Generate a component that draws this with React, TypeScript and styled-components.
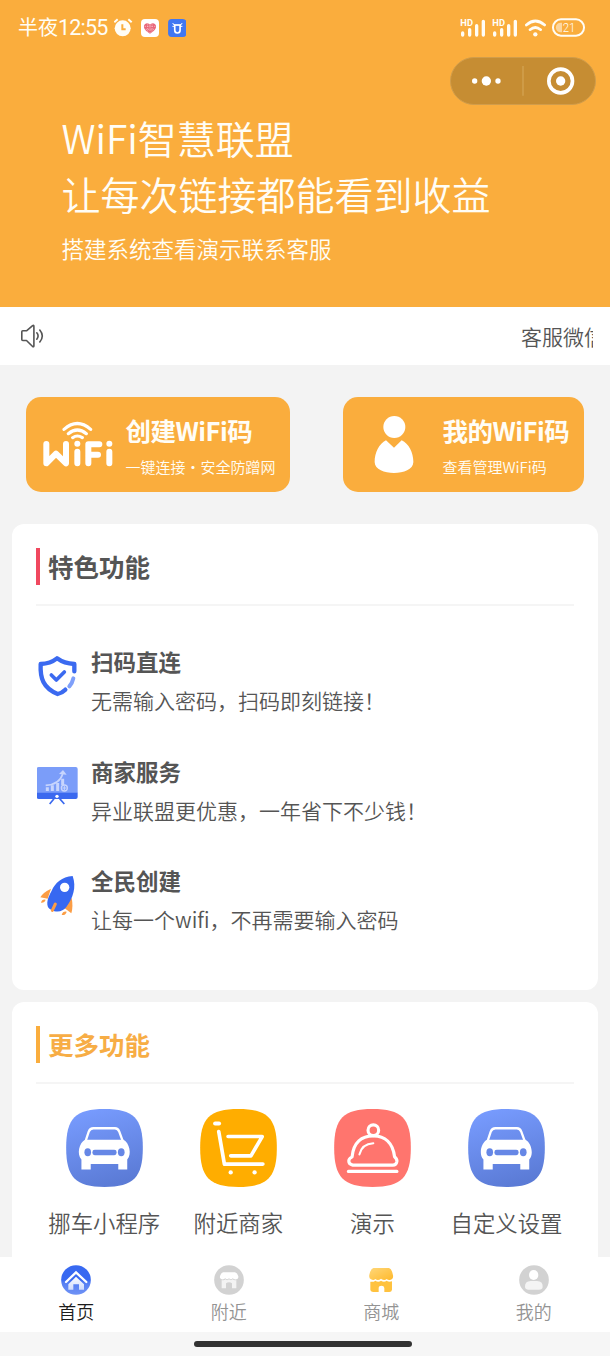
import React from "react";
import styled, { createGlobalStyle } from "styled-components";

const BRAND = "#faad3d";

const GlobalStyle = createGlobalStyle`
  * { box-sizing: border-box; }
  body {
    margin: 0;
    background: #f3f3f3;
    font-family: "Noto Sans CJK SC", "Noto Sans", sans-serif;
    font-weight: 350;
    color: #555;
  }
  svg { display: block; flex: none; }
`;

const Screen = styled.div`
  width: 610px;
  height: 1356px;
  display: flex;
  flex-direction: column;
  overflow: hidden;
`;

const Content = styled.main`
  flex: 1;
  min-height: 0;
  overflow: hidden;
`;

const Hero = styled.header`
  height: 307px;
  background: ${BRAND};
  color: #fffdf6;
`;

const StatusBar = styled.div`
  height: 55px;
  padding: 0 25px 0 18px;
  display: flex;
  align-items: center;
  justify-content: space-between;
`;

const StatusGroup = styled.div<{ $gap: number }>`
  display: flex;
  align-items: center;
  gap: ${(p) => p.$gap}px;
`;

const Clock = styled.span`
  width: 87px;
  font-size: 20px;
  line-height: 28px;
  font-weight: 400;
  white-space: nowrap;
`;

const ClockDigits = styled.span`
  font-family: Roboto, sans-serif;
  font-size: 21.5px;
  letter-spacing: -0.8px;
`;

const Capsule = styled.div`
  width: 146px;
  height: 48px;
  margin: 2px 14px 0 auto;
  border-radius: 24px;
  background: #c68d33;
  border: 1px solid #d19d4b;
`;

const HeroText = styled.div`
  padding: 4px 61px 0 61.5px;
`;

const HeroTitle = styled.h1`
  margin: 0;
  font-size: 39px;
  line-height: 56px;
  font-weight: 350;
  white-space: nowrap;
`;

const HeroSubtitle = styled.p`
  margin: 10px 0 0;
  font-size: 22.5px;
  line-height: 34px;
`;

const Notice = styled.div`
  height: 58px;
  padding: 0 17px 0 20px;
  display: flex;
  align-items: center;
  justify-content: space-between;
  background: #fff;
`;

const NoticeText = styled.div`
  width: 72px;
  overflow: hidden;
  white-space: nowrap;
  font-size: 21px;
  line-height: 32px;
`;

const Actions = styled.section`
  padding: 32px 26px;
  display: flex;
  justify-content: space-between;
`;

const ActionCard = styled.div<{ $width: number; $inset: number; $gap: number }>`
  width: ${(p) => p.$width}px;
  height: 95px;
  padding-left: ${(p) => p.$inset}px;
  display: flex;
  align-items: center;
  gap: ${(p) => p.$gap}px;
  border-radius: 15px;
  background: ${BRAND};
  color: #fffdf6;
  white-space: nowrap;
`;

const ActionTitle = styled.div`
  margin-top: 2px;
  font-size: 25.5px;
  line-height: 38px;
  font-weight: 700;
  letter-spacing: -0.5px;
`;

const ActionNote = styled.div`
  margin-top: 4px;
  font-size: 15px;
  line-height: 28px;
`;

const Panel = styled.section<{ $height: number }>`
  height: ${(p) => p.$height}px;
  margin: 0 12px 12px;
  padding: 24px 24px 0;
  border-radius: 12px;
  background: #fff;
`;

const PanelHeader = styled.div`
  height: 58px;
  border-bottom: 2px solid #f5f5f5;
`;

const PanelTitle = styled.h2<{ $bar: string; $color: string }>`
  margin: 0;
  height: 37px;
  display: flex;
  gap: 8.4px;
  color: ${(p) => p.$color};
  font-size: 25.5px;
  line-height: 36px;
  font-weight: 700;

  &::before {
    content: "";
    width: 3.6px;
    background: ${(p) => p.$bar};
  }
`;

const FeatureList = styled.div`
  padding-top: 37px;
`;

const Feature = styled.div`
  height: 109.5px;
  display: flex;
  gap: 12px;
`;

const FeatureIcon = styled.div`
  width: 43px;
  padding: 12px 0 0 1px;
`;

const FeatureName = styled.div`
  font-size: 22.5px;
  line-height: 36px;
  font-weight: 700;
`;

const FeatureText = styled.div`
  margin-top: 3px;
  font-size: 21px;
  line-height: 36px;
  white-space: nowrap;
`;

const ShortcutGrid = styled.div`
  display: grid;
  grid-template-columns: repeat(4, 134.1px);
  padding: 25px 0 0 1.2px;
`;

const Shortcut = styled.div`
  display: flex;
  flex-direction: column;
  align-items: center;
  gap: 18px;
  font-size: 22.4px;
  line-height: 34px;
`;

const TabBar = styled.nav`
  height: 75px;
  display: grid;
  grid-template-columns: repeat(4, 1fr);
  background: #fff;
`;

const Tab = styled.div<{ $active?: boolean }>`
  padding-top: 8px;
  display: flex;
  flex-direction: column;
  align-items: center;
  gap: 3px;
  font-size: 18px;
  line-height: 26px;
  color: ${(p) => (p.$active ? "#1c1c1c" : "#939393")};
`;

const GestureArea = styled.div`
  height: 24px;
  display: flex;
  justify-content: center;
  padding: 9px 4px 0 0;
  background: #f6f6f6;
`;

const GestureBar = styled.div`
  width: 218px;
  height: 6px;
  border-radius: 3px;
  background: #323232;
`;

const AlarmIcon = () => (
  <svg width="19" height="20" viewBox="341 53 57 60">
    <circle cx="367" cy="84" r="24" fill="#fffdf6" />
    <path d="M342 66 l10 -9 M394 66 l-10 -9" stroke="#fffdf6" strokeWidth="6" />
    <path d="M366 72 v15 h10" fill="none" stroke={BRAND} strokeWidth="6" />
  </svg>
);

const HeartIcon = () => (
  <svg width="18" height="18" viewBox="0 0 54 54">
    <rect width="54" height="54" rx="12" fill="#fff" />
    <path d="M27 44 C12 34 8 28 9 20 C11 11 22 10 27 17 C32 10 43 11 45 20 C46 28 42 34 27 44Z" fill="#e9677a" />
    <path d="M11 22 h32 M14 31 h26 M20 13 v26 M33 13 v25 M27 18 v25" stroke="#f8cdd2" strokeWidth="2" strokeDasharray="4 3" />
  </svg>
);

const BullIcon = () => (
  <svg width="18.5" height="18" viewBox="0 0 55 54">
    <rect width="55" height="54" rx="11" fill="#4077f2" />
    <path d="M14 12 q1 6 7 6 h14 q6 0 7 -6 M13 22 h7 M36 22 h7" fill="none" stroke="#fff" strokeWidth="3" />
    <path d="M20 18 h16 v16 q0 8 -8 8 t-8 -8Z" fill="none" stroke="#fff" strokeWidth="5" />
  </svg>
);

const SignalIcon = () => (
  <svg width="26" height="20" viewBox="92 52 78 60">
    <text x="93" y="75" fontSize="26" fontWeight="700" fontFamily="Roboto, sans-serif" textLength="38" lengthAdjust="spacingAndGlyphs" fill="#fffdf6">HD</text>
    <g stroke="#fffdf6" strokeWidth="10" strokeLinecap="round">
      <path d="M100 97 v6 M121 87 v16 M142 75 v28 M162 62 v41" />
    </g>
  </svg>
);

const WifiStatusIcon = () => (
  <svg width="21" height="18" viewBox="284 55 63 54">
    <g fill="none" stroke="#fffdf6" strokeWidth="8" strokeLinecap="round">
      <path d="M288 73 Q315 49 343 73 M299 87 Q315 74 331 87" />
    </g>
    <circle cx="315" cy="101" r="6.5" fill="#fffdf6" />
  </svg>
);

const BatteryIcon = () => (
  <svg width="33" height="19" viewBox="366 53 99 57">
    <rect x="369" y="57" width="93" height="49" rx="24" fill="none" stroke="#fffdf6" strokeWidth="6" />
    <path d="M396 67 h-4 a14.500 14.500 0 0 0 0 29 h4z" fill="#fdd79e" />
    <text x="398" y="95" fontSize="38" fontFamily="Roboto, sans-serif" textLength="38" lengthAdjust="spacingAndGlyphs" fill="#fffdf6">21</text>
  </svg>
);

const CapsuleIcon = () => (
  <svg width="144" height="46" viewBox="63 173 432 138">
    <g fill="#fff">
      <circle cx="134" cy="242" r="8" />
      <circle cx="169" cy="242" r="14" />
      <circle cx="204" cy="242" r="8" />
      <circle cx="392" cy="242" r="14" />
    </g>
    <circle cx="392" cy="242" r="35.500" fill="none" stroke="#fff" strokeWidth="11" />
    <path d="M279 197 v89" stroke="#d3a351" strokeWidth="4" />
  </svg>
);

const SpeakerIcon = () => (
  <svg width="25" height="26" viewBox="0 0 25 26" fill="none" stroke="#555" strokeWidth="1.6" strokeLinejoin="round">
    <path d="M1.800 8.800 q0 -1 1 -1 H6.500 L12.600 2.700 q1.300 -0.900 1.300 0.700 V22.800 q0 1.500 -1.300 0.700 L6.500 17.500 H2.800 q-1 0 -1 -1Z" />
    <path d="M16.800 9.800 q2.600 3.200 0 6.400 M19.800 7 q5 6 0 12" strokeLinecap="round" />
  </svg>
);

const WifiLogo = () => (
  <svg width="70" height="48" viewBox="68 92 210 144" fill="none" stroke="#fff" strokeLinecap="round" strokeLinejoin="round">
    <path d="M131 117 Q171 82 211 117 M144 130 Q171 108 198 130 M157 142 Q171 132 186 142" strokeWidth="9.500" />
    <path d="M78 161 V219 L107 190 L137 219 V161" strokeWidth="18" />
    <path d="M171 184 V219 M204 219 V162 H237 M204 193 H233 M267 184 V219" strokeWidth="18" />
    <circle cx="171" cy="160" r="9" fill="#fff" stroke="none" />
    <circle cx="267" cy="160" r="9" fill="#fff" stroke="none" />
  </svg>
);

const PersonIcon = () => (
  <svg width="40" height="60" viewBox="131 74 120 180" fill="#fff">
    <circle cx="192" cy="110" r="33" />
    <path d="M167 150 L191 172 L214 150 C236 160 250 190 249 216 C248 259 134 259 133 216 C132 190 146 160 167 150Z" />
  </svg>
);

const ShieldIcon = () => (
  <svg width="42" height="42" viewBox="110 405 126 126" fill="none" strokeLinecap="round" strokeLinejoin="round">
    <path d="M222 454 V432 Q192 431 170 415 Q150 431 121 432 C119 474 128 504 172 522 Q185 519 195 509" stroke="#3b6af0" strokeWidth="13" />
    <path d="M219 475 Q216 489 207 499" stroke="#7fa0fa" strokeWidth="12" />
    <path d="M153 465 L168 480 L192 456" stroke="#3b6af0" strokeWidth="11" />
  </svg>
);

const MonitorIcon = () => (
  <svg width="42" height="42" viewBox="52 45 126 126">
    <path d="M51 129 V57 q0 -6 6 -6 H168 q6 0 6 6 V129Z" fill="#7b9df9" />
    <path d="M51 128 H174 V141 q0 6 -6 6 H57 q-6 0 -6 -6Z" fill="#3b69ef" />
    <path d="M103 146 L90 162 M120 146 L134 162" stroke="#3b69ef" strokeWidth="5" />
    <circle cx="112" cy="139" r="5" fill="#fff" />
    <g stroke="#c7d5fd" fill="none">
      <path d="M78 106 Q119 104 129 72" strokeWidth="5" />
      <path d="M83 123 V112 M98 123 V106 M114 123 V99 M129 105 V86" strokeWidth="9" />
      <circle cx="134" cy="114" r="9" strokeWidth="4" />
      <path d="M134 108 v12 M128 114 h12" strokeWidth="3" />
    </g>
    <path d="M118 72 L130 60 L141 74Z" fill="#c7d5fd" />
  </svg>
);

const RocketIcon = () => (
  <svg width="42" height="42" viewBox="50 371 126 126">
    <g fill="#fb9d45">
      <path d="M92 415 Q67 427 60 441 L82 445Z" />
      <path d="M154 442 Q159 468 153 489 L132 473Z" />
      <path d="M62 457 Q65 445 76 448 Q73 458 62 457Z M124 494 Q127 482 139 484 Q136 496 124 494Z" />
    </g>
    <path d="M157 377 C124 379 105 398 94 421 C79 447 75 470 92 478 C110 488 127 484 138 470 C158 443 169 411 157 377Z" fill="#3768f1" />
    <circle cx="133" cy="411" r="14" fill="#fff" />
    <path d="M105 461 L96 480" stroke="#fb9d45" strokeWidth="9" strokeLinecap="round" />
  </svg>
);

const Squircle = ({ fill }: { fill: string }) => (
  <path d="M0 117 C0 28 28 0 115.500 0 S231 28 231 117 S203 235 115.500 235 S0 206 0 117Z" fill={fill} />
);

const CarIcon = ({ id }: { id: string }) => (
  <svg width="77" height="78" viewBox="0 0 231 235">
    <defs>
      <linearGradient id={id} x1="0.200" y1="0" x2="0.500" y2="1">
        <stop offset="0" stopColor="#789cff" />
        <stop offset="1" stopColor="#5b7bd6" />
      </linearGradient>
    </defs>
    <Squircle fill={`url(#${id})`} />
    <path d="M58 98 L68 68 Q72 58 82 58 H147 Q156 58 160 68 L171 98" fill="none" stroke="#fff" strokeWidth="7" />
    <path d="M57 93 H173 C190 102 199 137 184 152 V182 H157 V166 H74 V182 H46 V152 C31 137 39 102 57 93Z" fill="#fff" />
    <g fill="#6687e6">
      <ellipse cx="65" cy="130" rx="10" ry="12" />
      <ellipse cx="166" cy="130" rx="10" ry="12" />
      <rect x="79" y="123" width="73" height="16" rx="7" />
    </g>
  </svg>
);

const CartIcon = () => (
  <svg width="77" height="78" viewBox="0 0 231 235">
    <Squircle fill="#ffad00" />
    <g fill="none" stroke="#fff" strokeWidth="11" strokeLinecap="round" strokeLinejoin="round">
      <path d="M45 44 H57" strokeWidth="12" />
      <path d="M56 68 L73 166 H189" />
      <path d="M84 83 H187 L153 141 H92" />
    </g>
    <circle cx="92" cy="191" r="6.500" fill="#fff" />
    <circle cx="164" cy="191" r="6.500" fill="#fff" />
  </svg>
);

const ClocheIcon = () => (
  <svg width="77" height="78" viewBox="0 0 231 235">
    <Squircle fill="#ff756e" />
    <g fill="none" stroke="#fff" strokeWidth="9.500" strokeLinecap="round" strokeLinejoin="round">
      <circle cx="118" cy="64" r="16" />
      <path d="M54 144 C58 101 83 81 118 81 C153 81 177 102 182 144 Q190 151 189 158 Q187 169 177 169 H56 Q44 167 44 157 Q44 149 54 144Z" />
      <path d="M43 188 H189" />
      <path d="M76 137 Q83 105 118 103" strokeWidth="6" />
    </g>
  </svg>
);

const HomeIcon = () => (
  <svg width="30" height="30" viewBox="0 0 90 90">
    <defs>
      <linearGradient id="homeFade" x1="0" y1="0" x2="0" y2="1">
        <stop offset="0" stopColor="#fff" />
        <stop offset="1" stopColor="#fff" stopOpacity="0.700" />
      </linearGradient>
      <linearGradient id="homeDisc" x1="0" y1="0" x2="0" y2="1">
        <stop offset="0.500" stopColor="#3869f1" />
        <stop offset="0.600" stopColor="#567ff3" />
        <stop offset="1" stopColor="#6f92f5" />
      </linearGradient>
    </defs>
    <circle cx="45" cy="45" r="44.500" fill="url(#homeDisc)" />
    <path d="M15 51 L45 22 L76 51" fill="none" stroke="#fff" strokeWidth="7" strokeLinecap="round" />
    <path d="M45 35 L69 58 V74 H54 V58 H37 V74 H22 V58Z" fill="url(#homeFade)" />
  </svg>
);

const NearbyIcon = () => (
  <svg width="30" height="30" viewBox="0 0 90 90">
    <circle cx="45" cy="45" r="44.500" fill="#d2d2d2" />
    <path d="M27 22 H63 Q70 24 73 34 Q74 42 67 43 Q60 44 56 40 Q51 46 45 40 Q39 46 34 40 Q28 45 21 42 Q16 39 18 33 Q21 24 27 22Z" fill="#fff" />
    <path d="M23 45 Q31 47 34 43 Q39 48 45 43 Q51 48 56 43 Q61 47 67 45 V70 H54 V55 q-9 -7 -18 0 V70 H23Z" fill="#f3f3f3" />
  </svg>
);

const MallIcon = () => (
  <svg width="30" height="30" viewBox="0 0 90 90">
    <defs>
      <linearGradient id="mallRoof" x1="0" y1="0" x2="1" y2="1">
        <stop offset="0" stopColor="#ffd779" />
        <stop offset="1" stopColor="#ffb92b" />
      </linearGradient>
    </defs>
    <path d="M22 9 H69 Q78 12 81 31 Q83 43 72 45 Q66 46 62 42 Q55 48 45 41 Q36 48 28 42 Q23 47 15 43 Q8 40 10 29 Q14 11 22 9Z" fill="url(#mallRoof)" />
    <path d="M13 50 Q22 52 28 47 Q37 53 45 47 Q54 53 62 47 Q68 52 78 49 V74 Q77 81 70 81 H55 V69 q-1 -7 -8 -7 q-9 0 -9 7 V81 H21 Q13 80 13 74Z" fill="#ffc23f" />
  </svg>
);

const MineIcon = () => (
  <svg width="30" height="30" viewBox="0 0 90 90">
    <circle cx="45" cy="45" r="44.500" fill="#d2d2d2" />
    <ellipse cx="44" cy="30" rx="14" ry="15" fill="#fff" />
    <path d="M18 66 Q17 48 35 48 H54 Q72 48 71 66 Q70 74 60 74 H29 Q19 74 18 66Z" fill="#f4f4f4" />
  </svg>
);

const features = [
  { icon: <ShieldIcon />, name: "扫码直连", text: "无需输入密码，扫码即刻链接！" },
  { icon: <MonitorIcon />, name: "商家服务", text: "异业联盟更优惠，一年省下不少钱！" },
  { icon: <RocketIcon />, name: "全民创建", text: "让每一个wifi，不再需要输入密码" },
];

const shortcuts = [
  { icon: <CarIcon id="carA" />, name: "挪车小程序" },
  { icon: <CartIcon />, name: "附近商家" },
  { icon: <ClocheIcon />, name: "演示" },
  { icon: <CarIcon id="carB" />, name: "自定义设置" },
];

const tabs = [
  { icon: <HomeIcon />, name: "首页", active: true },
  { icon: <NearbyIcon />, name: "附近" },
  { icon: <MallIcon />, name: "商城" },
  { icon: <MineIcon />, name: "我的" },
];

export default function App() {
  return (
    <Screen lang="zh-CN">
      <GlobalStyle />
      <Content>
        <Hero>
          <StatusBar>
            <StatusGroup $gap={8.5}>
              <Clock>
                半夜<ClockDigits>12:55</ClockDigits>
              </Clock>
              <AlarmIcon />
              <HeartIcon />
              <BullIcon />
            </StatusGroup>
            <StatusGroup $gap={6.3}>
              <SignalIcon />
              <SignalIcon />
              <WifiStatusIcon />
              <BatteryIcon />
            </StatusGroup>
          </StatusBar>
          <Capsule>
            <CapsuleIcon />
          </Capsule>
          <HeroText>
            <HeroTitle>
              WiFi智慧联盟
              <br />
              让每次链接都能看到收益
            </HeroTitle>
            <HeroSubtitle>搭建系统查看演示联系客服</HeroSubtitle>
          </HeroText>
        </Hero>
        <Notice>
          <SpeakerIcon />
          <NoticeText>客服微信</NoticeText>
        </Notice>
        <Actions>
          <ActionCard $width={264} $inset={17} $gap={12.5}>
            <WifiLogo />
            <div>
              <ActionTitle>创建WiFi码</ActionTitle>
              <ActionNote>一键连接・安全防蹭网</ActionNote>
            </div>
          </ActionCard>
          <ActionCard $width={241} $inset={31} $gap={28.5}>
            <PersonIcon />
            <div>
              <ActionTitle>我的WiFi码</ActionTitle>
              <ActionNote>查看管理WiFi码</ActionNote>
            </div>
          </ActionCard>
        </Actions>
        <Panel $height={466}>
          <PanelHeader>
            <PanelTitle $bar="#f0485f" $color="#555">特色功能</PanelTitle>
          </PanelHeader>
          <FeatureList>
            {features.map((f) => (
              <Feature key={f.name}>
                <FeatureIcon>{f.icon}</FeatureIcon>
                <div>
                  <FeatureName>{f.name}</FeatureName>
                  <FeatureText>{f.text}</FeatureText>
                </div>
              </Feature>
            ))}
          </FeatureList>
        </Panel>
        <Panel $height={300}>
          <PanelHeader>
            <PanelTitle $bar={BRAND} $color="#f7ad45">更多功能</PanelTitle>
          </PanelHeader>
          <ShortcutGrid>
            {shortcuts.map((s) => (
              <Shortcut key={s.name}>
                {s.icon}
                {s.name}
              </Shortcut>
            ))}
          </ShortcutGrid>
        </Panel>
      </Content>
      <TabBar>
        {tabs.map((t) => (
          <Tab key={t.name} $active={t.active}>
            {t.icon}
            {t.name}
          </Tab>
        ))}
      </TabBar>
      <GestureArea>
        <GestureBar />
      </GestureArea>
    </Screen>
  );
}
